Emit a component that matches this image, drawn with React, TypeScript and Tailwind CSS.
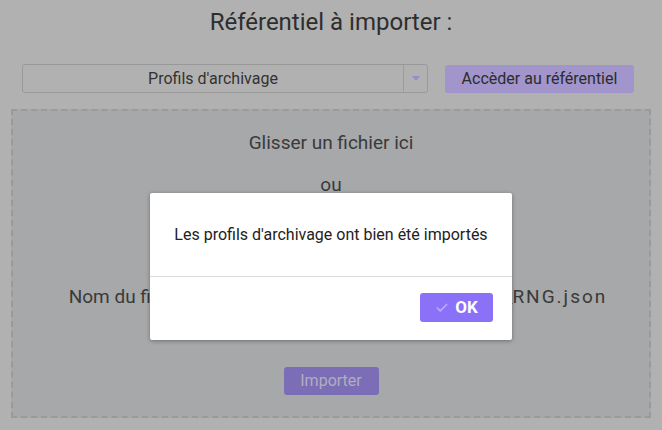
import { Check } from 'lucide-react';

const App = () => {
  return (
    <div
      className="relative h-[430px] w-full overflow-hidden bg-[#b1b1b1] text-[#3a3a3a]"
      style={{ fontFamily: 'Roboto, "Noto Sans", sans-serif' }}
    >
      <div className="px-[11px] pt-[6px]">
        <h1 className="text-center text-[24px] leading-[32px] text-[#2e2e2e]">Référentiel à importer :</h1>

        <div className="mt-[26px] flex items-center gap-[17px] pl-[11px] pr-[17px]">
          <div className="flex h-[29px] flex-1 items-stretch rounded-[3px] border border-[#999]">
            <div className="flex flex-1 items-center justify-center text-[16px] text-[#333]">Profils d'archivage</div>
            <div className="flex w-[24px] items-center justify-center border-l border-[#9c9c9c]">
              <span className="h-0 w-0 border-x-[4px] border-t-[5px] border-x-transparent border-t-[#9a8ccd]" />
            </div>
          </div>
          <button className="h-[28px] w-[189px] rounded-[3px] bg-[#a195cb] text-[16px] text-[#2c2c2c]">
            Accèder au référentiel
          </button>
        </div>

        <div className="mt-[16px] flex h-[309px] flex-col items-center border-2 border-dashed border-[#9a9a9a] bg-[#a7a8aa] text-[19px]">
          <p className="mt-[19px] leading-[26px]">Glisser un fichier ici</p>
          <p className="mt-[16px] leading-[26px]">ou</p>
          <p className="mt-[86px] whitespace-nowrap pl-[14px] leading-[26px]">
            Nom du fichier sélectionné : Profils_archivage_Seda_<span className="tracking-[2px]">RNG.json</span>
          </p>
          <button className="mt-[57px] h-[28px] w-[95px] rounded-[3px] bg-[#7b6db6] text-[16px] text-[#b0aec0]">
            Importer
          </button>
        </div>
      </div>

      <div className="absolute left-1/2 top-[193px] w-[362px] -translate-x-1/2 rounded-[2px] bg-white shadow-[0_1px_4px_rgba(0,0,0,0.35)]">
        <div className="flex h-[84px] items-center justify-center border-b border-[#dcdcdc] text-[16px] text-[#222]">
          Les profils d'archivage ont bien été importés
        </div>
        <div className="flex h-[63px] items-start justify-end pr-[19px] pt-[16px]">
          <button className="flex h-[29px] w-[73px] items-center justify-center gap-[6px] rounded-[3px] bg-[#8b70f8] text-[17px] font-bold text-white">
            <Check className="h-[14px] w-[14px] text-[#bba9fb]" strokeWidth={3} />
            OK
          </button>
        </div>
      </div>
    </div>
  );
};

export default App;
